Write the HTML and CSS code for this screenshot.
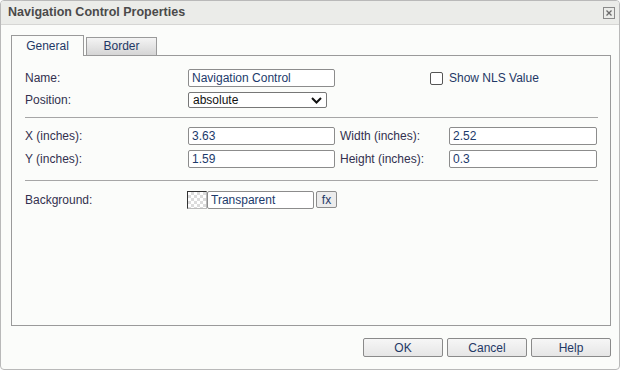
FILE: index.html
```html
<!DOCTYPE html>
<html lang="en">
<head>
    <meta charset="UTF-8">
    <title>Navigation Control Properties</title>
    <link rel="stylesheet" href="styles.css">
</head>
<body>
    <div class="dialog">
        <div class="titlebar">
            <span class="title">Navigation Control Properties</span>
            <span class="close">
                <svg width="12" height="12" viewBox="0 0 12 12">
                    <rect x="0.5" y="0.5" width="11" height="11" fill="none" stroke="#8a8a8a"/>
                    <path d="M3.5 3.5 L8.5 8.5 M8.5 3.5 L3.5 8.5" stroke="#6a6a6a" stroke-width="1.3"/>
                </svg>
            </span>
        </div>
        <div class="content">
            <div class="tabs">
                <div class="tab active">General</div>
                <div class="tab">Border</div>
            </div>
            <div class="panel">
                <div class="row">
                    <label class="lbl">Name:</label>
                    <input class="field" type="text" value="Navigation Control">
                    <label class="check"><span class="box"></span>Show NLS Value</label>
                </div>
                <div class="row row-tight row-select">
                    <label class="lbl">Position:</label>
                    <div class="select">
                        <span>absolute</span>
                        <svg width="11" height="7" viewBox="0 0 11 7">
                            <path d="M1 1 L5.5 5.5 L10 1" fill="none" stroke="#111" stroke-width="2"/>
                        </svg>
                    </div>
                </div>
                <div class="sep"></div>
                <div class="row">
                    <label class="lbl">X (inches):</label>
                    <input class="field" type="text" value="3.63">
                    <label class="lbl2">Width (inches):</label>
                    <input class="field wide" type="text" value="2.52">
                </div>
                <div class="row row-tight">
                    <label class="lbl">Y (inches):</label>
                    <input class="field" type="text" value="1.59">
                    <label class="lbl2">Height (inches):</label>
                    <input class="field wide" type="text" value="0.3">
                </div>
                <div class="sep sep-low"></div>
                <div class="row row-bg">
                    <label class="lbl lbl-bg">Background:</label>
                    <span class="swatch"></span>
                    <input class="field color" type="text" value="Transparent">
                    <button class="fx">fx</button>
                </div>
            </div>
            <div class="buttons">
                <button class="btn">OK</button>
                <button class="btn">Cancel</button>
                <button class="btn">Help</button>
            </div>
        </div>
    </div>
</body>
</html>
```

FILE: styles.css
```css
body {
    margin: 0;
    padding: 0;
    font-family: "Liberation Sans", Arial, sans-serif;
    font-size: 12px;
    background-color: #fff;
}
.dialog {
    width: 620px;
    height: 370px;
    box-sizing: border-box;
    border: 1px solid #b9b9b9;
    border-radius: 4px;
    background-color: #fbfcfa;
    overflow: hidden;
}
.titlebar {
    height: 23px;
    background-color: #ebece9;
    border-bottom: 1px solid #d6d6d4;
    display: flex;
    align-items: center;
    justify-content: space-between;
    padding: 0 4px 0 7px;
}
.title {
    font-weight: bold;
    color: #4a4a4a;
    font-size: 12.5px;
    margin-top: -2px;
}
.close {
    display: flex;
    margin-top: 1px;
}
.content {
    padding: 10px 8px 0 10px;
}
.tabs {
    display: flex;
    align-items: flex-end;
    height: 20px;
}
.tab {
    box-sizing: border-box;
    height: 18px;
    width: 71px;
    margin-left: 1px;
    border: 1px solid #9a9a9a;
    border-bottom: none;
    background: linear-gradient(#f4f4f4, #d5d5d5);
    color: #1f3866;
    text-align: center;
    line-height: 17px;
}
.tab.active {
    position: relative;
    z-index: 1;
    height: 21px;
    width: 73px;
    margin-left: 0;
    margin-right: 1px;
    margin-bottom: -1px;
    background: #fbfcfa;
    line-height: 21px;
}
.panel {
    box-sizing: border-box;
    height: 271px;
    border: 1px solid #9a9a9a;
    padding: 13px 12px 0 13px;
}
.row {
    display: flex;
    align-items: center;
    height: 18px;
}
.row-tight {
    margin-top: 5px;
}
.row-select {
    height: 16px;
}
.lbl {
    width: 163px;
    color: #33304f;
}
.lbl2 {
    width: 109px;
    padding-left: 5px;
    color: #33304f;
}
.field {
    box-sizing: border-box;
    width: 147px;
    height: 18px;
    margin: 0;
    padding: 0 3px;
    border: 1px solid #8c8c8c;
    border-radius: 2px;
    background: #fff;
    font-family: "Liberation Sans", Arial, sans-serif;
    font-size: 12px;
    color: #1c3a6b;
    outline: none;
}
.field.wide {
    width: 148px;
}
.check {
    display: flex;
    align-items: center;
    margin-left: 95px;
    color: #1f3866;
}
.box {
    box-sizing: border-box;
    width: 13px;
    height: 13px;
    border: 1px solid #555;
    border-radius: 2px;
    background: #fff;
    margin-right: 6px;
}
.select {
    box-sizing: border-box;
    width: 139px;
    height: 16px;
    border: 1px solid #777;
    border-radius: 2px;
    background: #fff;
    display: flex;
    align-items: center;
    justify-content: space-between;
    padding: 0 4px 0 4px;
    color: #111;
}
.sep {
    height: 1px;
    background-color: #a6a6a6;
    margin: 9px 0 9px 0;
}
.sep-low {
    margin: 12px 0 10px 0;
}
.row-bg .lbl-bg {
    width: 162px;
}
.swatch {
    box-sizing: border-box;
    width: 20px;
    height: 18px;
    border-top: 1px solid #333;
    border-left: 1px solid #333;
    border-right: 1px solid #bbb;
    border-bottom: 1px solid #bbb;
    background: repeating-conic-gradient(#dcdcdc 0 25%, #fff 0 50%) 0 0 / 6px 6px;
}
.field.color {
    width: 107px;
}
.fx {
    box-sizing: border-box;
    width: 21px;
    height: 17px;
    margin: 0 0 1px 2px;
    padding: 0;
    border: 1px solid #8c8c8c;
    border-radius: 2px;
    background: #ececec;
    font-family: "Liberation Sans", Arial, sans-serif;
    font-size: 12px;
    color: #1f3866;
    align-self: flex-start;
}
.buttons {
    display: flex;
    justify-content: flex-end;
    gap: 4px;
    margin-top: 12px;
}
.btn {
    box-sizing: border-box;
    width: 80px;
    height: 19px;
    padding: 0;
    border: 1px solid #8a8a8a;
    border-radius: 2px;
    background: linear-gradient(#f6f6f6, #e6e6e6);
    font-family: "Liberation Sans", Arial, sans-serif;
    font-size: 12px;
    color: #1f3866;
}
```
